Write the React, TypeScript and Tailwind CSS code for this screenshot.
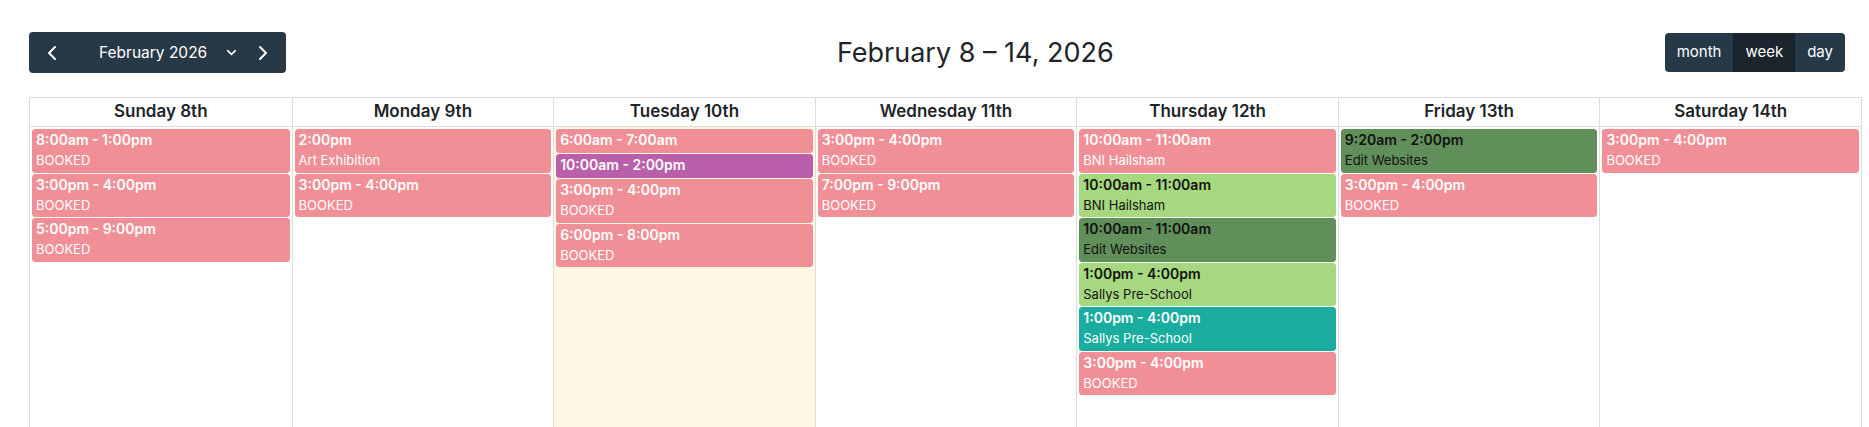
import { ChevronDown, ChevronLeft, ChevronRight } from 'lucide-react';

type Tone = 'booked' | 'purple' | 'lime' | 'forest' | 'teal';

interface CalendarEvent {
  readonly time: string;
  readonly title?: string;
  readonly tone: Tone;
}

interface DayColumn {
  readonly label: string;
  readonly today?: boolean;
  readonly events: CalendarEvent[];
}

const toneClasses: Record<Tone, string> = {
  booked: 'bg-[#f09096] border-[#f09096] text-white',
  purple: 'bg-[#ba5fab] border-[#ba5fab] text-white',
  lime: 'bg-[#a5d87f] border-[#a5d87f] text-[#111]',
  forest: 'bg-[#608f59] border-[#608f59] text-[#111]',
  teal: 'bg-[#1aad9f] border-[#1aad9f] text-white',
};

const days: DayColumn[] = [
  {
    label: 'Sunday 8th',
    events: [
      { time: '8:00am - 1:00pm', title: 'BOOKED', tone: 'booked' },
      { time: '3:00pm - 4:00pm', title: 'BOOKED', tone: 'booked' },
      { time: '5:00pm - 9:00pm', title: 'BOOKED', tone: 'booked' },
    ],
  },
  {
    label: 'Monday 9th',
    events: [
      { time: '2:00pm', title: 'Art Exhibition', tone: 'booked' },
      { time: '3:00pm - 4:00pm', title: 'BOOKED', tone: 'booked' },
    ],
  },
  {
    label: 'Tuesday 10th',
    today: true,
    events: [
      { time: '6:00am - 7:00am', tone: 'booked' },
      { time: '10:00am - 2:00pm', tone: 'purple' },
      { time: '3:00pm - 4:00pm', title: 'BOOKED', tone: 'booked' },
      { time: '6:00pm - 8:00pm', title: 'BOOKED', tone: 'booked' },
    ],
  },
  {
    label: 'Wednesday 11th',
    events: [
      { time: '3:00pm - 4:00pm', title: 'BOOKED', tone: 'booked' },
      { time: '7:00pm - 9:00pm', title: 'BOOKED', tone: 'booked' },
    ],
  },
  {
    label: 'Thursday 12th',
    events: [
      { time: '10:00am - 11:00am', title: 'BNI Hailsham', tone: 'booked' },
      { time: '10:00am - 11:00am', title: 'BNI Hailsham', tone: 'lime' },
      { time: '10:00am - 11:00am', title: 'Edit Websites', tone: 'forest' },
      { time: '1:00pm - 4:00pm', title: 'Sallys Pre-School', tone: 'lime' },
      { time: '1:00pm - 4:00pm', title: 'Sallys Pre-School', tone: 'teal' },
      { time: '3:00pm - 4:00pm', title: 'BOOKED', tone: 'booked' },
    ],
  },
  {
    label: 'Friday 13th',
    events: [
      { time: '9:20am - 2:00pm', title: 'Edit Websites', tone: 'forest' },
      { time: '3:00pm - 4:00pm', title: 'BOOKED', tone: 'booked' },
    ],
  },
  {
    label: 'Saturday 14th',
    events: [{ time: '3:00pm - 4:00pm', title: 'BOOKED', tone: 'booked' }],
  },
];

export default function App() {
  return (
    <div className="min-h-screen bg-white pt-[32px] pl-[29px] pr-[7px] font-['Inter',sans-serif] text-[#212529]">
      <Toolbar />
      <div className="mt-[24px] grid grid-cols-7 border border-[#dddddd]">
        {days.map((day, i) => (
          <div
            key={day.label}
            className={i === 0 ? 'flex flex-col' : 'flex flex-col border-l border-[#dddddd]'}
          >
            <div className="flex h-[29px] items-center justify-center border-b border-[#dddddd] text-[17px] font-semibold">
              {day.label}
            </div>
            <div
              className={
                day.today
                  ? 'flex h-[320px] flex-col gap-[1px] bg-[#fff6e3] p-[2px]'
                  : 'flex h-[320px] flex-col gap-[1px] p-[2px]'
              }
            >
              {day.events.map((event, j) => (
                <EventChip key={j} event={event} />
              ))}
            </div>
          </div>
        ))}
      </div>
    </div>
  );
}

function Toolbar() {
  return (
    <div className="mr-[17px] flex items-center justify-between">
      <div className="flex h-[41px] items-center rounded-[4px] bg-[#273846] text-white">
        <button className="flex h-full w-[46px] items-center justify-center">
          <ChevronLeft size={24} strokeWidth={2} />
        </button>
        <button className="flex h-full w-[165px] items-center pl-[24px] text-[15.5px]">
          <span>February 2026</span>
          <ChevronDown size={15} strokeWidth={2.6} className="ml-auto mr-[1px]" />
        </button>
        <button className="flex h-full w-[46px] items-center justify-center">
          <ChevronRight size={24} strokeWidth={2} />
        </button>
      </div>
      <h2 className="text-[27px] font-normal leading-none">February 8 – 14, 2026</h2>
      <div className="flex h-[39px] overflow-hidden rounded-[4px] bg-[#273846] text-[15px] text-white">
        <button className="px-[12px]">month</button>
        <button className="bg-[#1b252d] px-[12px]">week</button>
        <button className="px-[12px]">day</button>
      </div>
    </div>
  );
}

interface EventChipProps {
  readonly event: CalendarEvent;
}

function EventChip({ event }: EventChipProps) {
  return (
    <div className={`rounded-[3px] border px-[3px] pt-[1px] pb-[1px] ${toneClasses[event.tone]}`}>
      <div className="mb-[2px] text-[14px] font-semibold leading-[18px]">{event.time}</div>
      {event.title && <div className="text-[13px] leading-[19.5px]">{event.title}</div>}
    </div>
  );
}
